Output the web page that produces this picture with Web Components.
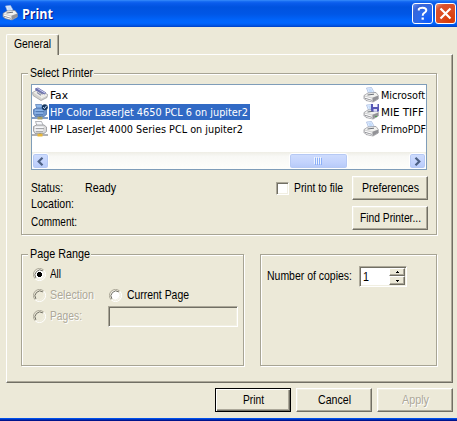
<!DOCTYPE html>
<html lang="en">
<head>
<meta charset="utf-8">
<title>Print</title>
<style>
html,body{margin:0;padding:0;overflow:hidden}
body{width:457px;height:421px;background:#ECE9D8;color:#000;font-family:"Liberation Sans",Arial,sans-serif}
</style>
</head>
<body>
<print-dialog></print-dialog>
<script>
const define = (name, html, setup) => customElements.define(name, class extends HTMLElement {
  connectedCallback() {
    if (this.shadowRoot) return;
    this.attachShadow({mode: 'open'}).innerHTML = typeof html === 'function' ? html(this) : html;
    if (setup) setup(this, this.shadowRoot);
  }
});

// Text fitted horizontally to the width given in "w".
define('ui-label', `<style>
:host{display:block;height:16px;line-height:16px;font-size:12.4px;white-space:nowrap;flex:none}
:host([face=list]){font-family:"DejaVu Sans Condensed","DejaVu Sans",sans-serif;font-size:11px;line-height:17px}
:host([disabled]){color:#ACA899;text-shadow:1px 1px 0 #fff}
span{display:inline-block;transform-origin:0 50%}
</style><span></span>`, (host, root) => {
  const span = root.querySelector('span'), w = +host.getAttribute('w');
  span.textContent = host.getAttribute('text');
  host.style.width = w + 'px';
  span.style.transform = `scaleX(${w / span.getBoundingClientRect().width})`;
});

const printer = `
<path d="M3.500 1 8.500 .5 11.500 6 6 7.500z" fill="#EAF3FF" stroke="#9DB4DE" stroke-width=".7"/>
<path d="M5 1.700 8 1.400 10 5.500 6.700 6z" fill="#C4DCFB"/>
<path d="M1 8.500 5 6 13 5.500 15.300 8.500V12L10 15 3 13.500 1 11.500z" fill="#D2D2D3" stroke="#8E8E93" stroke-width=".7"/>
<path d="M1.500 8.500 5 6.500 12.700 6 15 8.500 9.500 10.500z" fill="#F1F1EF"/>
<path d="M4.500 8 11 7.200" stroke="#6C717A"/>
<path d="M9.500 10.700 15 8.800V11.800L9.800 14.700z" fill="#929297"/>
<path d="M2 10.300 9 12.400M3 12.300 9 14" stroke="#fff" stroke-width="1.100"/>
<path d="M2 11.300 9 13.400" stroke="#77797F" stroke-width=".7"/>`;
const netPrinter = (a, b, c, l) => `
<path d="M3.500 .5H9.500L11.500 5H5z" fill="${a}" stroke="${c}" stroke-width=".6"/>
<path d="M1.500 5.500 4.500 4H12L14.500 6V10.500L12 12.500H3L1.500 10z" fill="${b}" stroke="${c}" stroke-width=".7"/>
<path d="M3 6.200H11.500M2.500 9H11" stroke="${a}" stroke-width="1.400"/>
<path d="M4 7.600H12M4 10.700H11" stroke="${c}" stroke-width=".7"/>
<path d="M0 14H16" stroke="${c}" stroke-width="1.300"/><path d="M8 12V14" stroke="${c}" stroke-width="1.500"/>
<rect x="5.500" y="12.700" width="5" height="2.800" fill="${l}"/>`;
const icons = {
  printer,
  tiff: printer + `<path d="M8 0H16V7.500H9L8 6.500z" fill="#5757B5"/><rect x="10" y="0" width="4.500" height="3" fill="#F5F5FF"/><rect x="10.500" y="5" width="3.500" height="2.500" fill="#DADAF4"/><path d="M12 12.500H14" stroke="#4FA04F"/>`,
  fax: `<path d="M.5 5.500 7 2 15.500 7.500 15 10.500 9 13.500 1 8.500z" fill="#D4D3CF" stroke="#95959A" stroke-width=".7"/>
<path d="M1.500 5.500 7 2.700 14.500 7.500 9 10.500z" fill="#EFEEE9"/>
<path d="M3 1.500 6 .5 14 5.500 13 7.500 9.500 6.500 3.500 3.500z" fill="#6E72AE"/>
<path d="M5.500 1.500 13 6" stroke="#CDD2F2"/>
<path d="M5 5.500 9 8.300M7 4.900 10.700 7.300" stroke="#858BA8" stroke-width="1.100"/><path d="M9 11 15 8" stroke="#fff" stroke-width=".8"/>`,
  shared: netPrinter('#F6F8FB', '#D8D8D8', '#85878C', '#E9B83A'),
  selected: netPrinter('#8DB6EA', '#7096CC', '#3F6AA8', '#A89F63') + `<circle cx="12.800" cy="3.200" r="3" fill="#15365F"/><path d="M11.200 3.100 12.500 4.600 14.700 1.700" fill="none" stroke="#C7DFFF" stroke-width="1"/>`
};
define('ui-icon', h => `<style>:host{display:block;width:17px;height:17px;flex:none}svg{display:block}</style>
<svg width="17" height="17" viewBox="0 0 17 17">${icons[h.getAttribute('kind')]}</svg>`);

define('title-button', h => `<style>
:host{display:block;box-sizing:border-box;width:21px;height:21px;border:1px solid #fff;border-radius:3px;
background:radial-gradient(circle at 80% 85%,#0A5BFF,#2E6BEA 45%,#3865D8 75%,#6E93EC)}
:host([kind=close]){background:radial-gradient(circle at 75% 85%,#D83A05,#DD4C22 50%,#D9502D 75%,#EC9A82)}
svg{display:block}</style><svg width="19" height="19" viewBox="0 0 19 19" fill="none" stroke="#fff">
${h.getAttribute('kind') === 'close' ? '<path d="M4.500 4.500 14.500 14.500M14.500 4.500 4.500 14.500" stroke-width="2.200"/>'
 : '<path d="M5.800 6.500V5Q6.500 3.700 9.500 3.700 13.300 3.700 13.300 6.300 13.300 8 11.300 8.900 9.700 9.700 9.700 11.700" stroke-width="2"/><path d="M9.700 13.500V15.700" stroke-width="2.300"/>'}</svg>`);

define('title-bar', `<style>
:host{display:flex;box-sizing:border-box;height:27px;padding:3px 1px 0 2px;
background:linear-gradient(#3E92FC 0,#1C72F4 1px,#0A5CEC 3px,#0053DF 7px,#0056E6 14px,#0064FB 20px,#0066FF 23px,#005AEC 25px,#0040C4 27px)}
ui-icon{margin-top:2px}
ui-label{font-family:"Open Sans","Noto Sans",sans-serif;font-weight:700;font-size:13.500px;color:#fff;text-shadow:1px 1px 0 #0A1883;margin:3px auto 0 3px}
title-button+title-button{margin-left:2px}
</style><ui-icon kind="printer"></ui-icon><ui-label text="Print" w="31"></ui-label><title-button kind="help"></title-button><title-button kind="close"></title-button>`);

define('group-box', h => `<style>
:host{display:block;box-sizing:border-box;border:1px solid #A7A494;box-shadow:1px 1px 0 #fff,inset 1px 1px 0 #fff}
ui-label{background:#ECE9D8;padding:0 1px 0 2px;margin:-9px 0 0 6px}
</style>${h.hasAttribute('legend') ? `<ui-label text="${h.getAttribute('legend')}" w="${h.getAttribute('lw')}"></ui-label>` : ''}<slot></slot>`);

define('push-button', h => `<style>
:host{display:flex;box-sizing:border-box;width:76px;height:24px;align-items:center;justify-content:center;
border:1px solid;border-color:#fff #716F64 #716F64 #fff;box-shadow:inset -1px -1px 0 #ACA899,inset 1px 1px 0 #F1EFE2}
:host([default]){border:1px solid #000;box-shadow:inset 1px 1px 0 #fff,inset -1px -1px 0 #716F64,inset -2px -2px 0 #ACA899}
</style><ui-label text="${h.getAttribute('text')}" w="${h.getAttribute('w')}" ${h.hasAttribute('disabled') ? 'disabled' : ''}></ui-label>`);

define('radio-option', h => `<style>
:host{display:flex;align-items:center;height:16px}svg{display:block;margin-right:${h.getAttribute('gap') || 4}px}
</style><svg width="13" height="13" viewBox="0 0 13 13"><circle cx="6.500" cy="6.500" r="5" fill="${h.hasAttribute('disabled') ? '#ECE9D8' : '#fff'}"/>
<g fill="none"><path d="M2.200 10.800A6 6 0 0 1 10.800 2.200" stroke="#ACA899"/><path d="M2.200 10.800A6 6 0 0 0 10.800 2.200" stroke="#fff"/>
<path d="M3 10A5 5 0 0 1 10 3" stroke="#716F64"/><path d="M3 10A5 5 0 0 0 10 3" stroke="#F1EFE2"/></g>
${h.hasAttribute('checked') ? '<path d="M5 4H8V5H9V8H8V9H5V8H4V5H5z" fill="#000"/>' : ''}</svg>
<ui-label text="${h.getAttribute('text')}" w="${h.getAttribute('w')}" ${h.hasAttribute('disabled') ? 'disabled' : ''}></ui-label>`);

define('sunken-box', `<style>
:host{display:flex;box-sizing:border-box;border:1px solid;border-color:#ACA899 #fff #fff #ACA899;
box-shadow:inset 1px 1px 0 #716F64,inset -1px -1px 0 #F1EFE2}</style><slot></slot>`);

define('copies-spinner', `<style>
:host{display:block}
sunken-box{width:48px;height:21px;background:#fff;padding:1px}
ui-label{margin:1px auto 0 2px}
.s{display:grid;grid-template-rows:8px 9px;width:16px}
.s div{display:flex;align-items:center;justify-content:center;box-sizing:border-box;background:#ECE9D8;border:1px solid;border-color:#fff #716F64 #716F64 #fff;box-shadow:inset -1px -1px 0 #ACA899}
svg{display:block}
</style><sunken-box><ui-label text="1" w="6"></ui-label><div class="s"><div><svg width="3" height="2"><path d="M1 0H2V1H3V2H0V1H1z"/></svg></div><div><svg width="3" height="2"><path d="M0 0H3V1H2V2H1V1H0z"/></svg></div></div></sunken-box>`);

define('list-item', h => `<style>
:host{display:flex;height:17px}
div{height:16px;padding:0 2px 0 1px}
:host([selected]) div{background:#316AC5;color:#fff}
</style><ui-icon kind="${h.getAttribute('icon')}"></ui-icon><div><ui-label face="list" text="${h.getAttribute('text')}" w="${h.getAttribute('w')}"></ui-label></div>`);

define('scroll-bar', `<style>
:host{display:flex;height:17px;background:linear-gradient(#EEEDE5,#F8F8F5 25%,#FEFEFB)}
.b,.t{box-sizing:border-box;height:16px;margin-top:1px;border:1px solid #fff;border-radius:3px;background:linear-gradient(#CFDDFD,#C3D3FD 60%,#B5C9F8);box-shadow:inset 0 0 0 1px #B6C9F4;display:flex;align-items:center;justify-content:center}
.b{width:17px}.t{width:59px;margin-left:240px;margin-right:auto}svg{display:block}
</style>
<div class="b"><svg width="9" height="9" fill="none" stroke="#4D6185" stroke-width="2.200"><path d="M6.500 .8 2.700 4.500 6.500 8.200"/></svg></div>
<div class="t"><svg width="9" height="8"><path d="M.5 0V7M2.500 0V7M4.500 0V7M6.500 0V7" stroke="#EEF4FE"/><path d="M1.500 1V8M3.500 1V8M5.500 1V8M7.500 1V8" stroke="#8CB0F8"/></svg></div>
<div class="b"><svg width="9" height="9" fill="none" stroke="#4D6185" stroke-width="2.200"><path d="M2.500 .8 6.300 4.500 2.500 8.200"/></svg></div>`);

define('printer-list', `<style>
:host{display:flex;flex-direction:column;justify-content:space-between;box-sizing:border-box;width:396px;height:86px;border:1px solid #7F9DB9;background:#fff;overflow:hidden}
.c{display:grid;grid-template-columns:331px 63px;padding-top:2px}
</style><div class="c"><div>
<list-item icon="fax" text="Fax" w="18"></list-item>
<list-item icon="selected" selected text="HP Color LaserJet 4650 PCL 6 on jupiter2" w="198"></list-item>
<list-item icon="shared" text="HP LaserJet 4000 Series PCL on jupiter2" w="193"></list-item></div><div>
<list-item icon="printer" text="Microsoft" w="44"></list-item>
<list-item icon="tiff" text="MIE TIFF" w="43"></list-item>
<list-item icon="printer" text="PrimoPDF" w="45"></list-item></div></div>
<scroll-bar></scroll-bar>`);

define('tab-panel', `<style>
:host{display:block;margin:7px 0 0 6px}
.tab{box-sizing:border-box;width:53px;height:21px;margin-bottom:-1px;position:relative;background:#ECE9D8;border:1px solid #fff;border-right-color:#716F64;border-bottom:0;border-radius:2px 2px 0 0;box-shadow:inset -1px 0 0 #ACA899;padding:1px 0 0 7px}
.panel{box-sizing:border-box;width:447px;height:329px;border:1px solid;border-color:#fff #716F64 #716F64 #fff;box-shadow:inset -1px -1px 0 #ACA899;padding:18px 0 0 14px}
</style><div class="tab"><ui-label text="General" w="37"></ui-label></div><div class="panel"><slot></slot></div>`);

define('print-dialog', `<style>
:host{display:flex;flex-direction:column;width:457px;height:421px;background:#ECE9D8}
.g1{width:416px;height:162px}
printer-list{margin:3px 0 0 9px}
.info{display:flex;justify-content:space-between;padding:6px 8px 0 9px}
.status{display:grid;grid-template-columns:54px auto;grid-template-rows:16px 18px 16px;padding-top:4px}
.right{display:grid;grid-template-columns:13px 63px 76px;row-gap:6px;align-items:center}
.right sunken-box{width:13px;height:13px;background:#fff}
.right ui-label{margin-left:5px}
.right push-button{grid-column:3}
.row{display:flex;gap:16px;margin-top:19px}
.g2{width:223px;height:112px}.g3{width:177px;height:112px}
.opts{display:grid;grid-template-columns:76px 129px;grid-template-rows:22px 20px 22px;align-items:center;padding:1px 0 0 11px}
.opts sunken-box{width:130px;height:21px;margin-left:-1px}
.copies{display:flex;align-items:center;gap:7px;padding:11px 0 0 6px}
.copies ui-label{margin-top:-2px}
.actions{display:flex;gap:5px;margin:5px 0 0 215px}
.edge{height:3px;margin-top:auto;background:linear-gradient(#0050EA 0 1px,#0030B8 1px 2px,#00138C 2px)}
</style>
<title-bar></title-bar>
<tab-panel>
 <group-box class="g1" legend="Select Printer" lw="63">
  <printer-list></printer-list>
  <div class="info"><div class="status"><ui-label text="Status:" w="32"></ui-label><ui-label text="Ready" w="31"></ui-label><ui-label text="Location:" w="43" style="grid-column:1/3"></ui-label><ui-label text="Comment:" w="46" style="grid-column:1/3"></ui-label></div>
  <div class="right"><sunken-box></sunken-box><ui-label text="Print to file" w="49"></ui-label><push-button text="Preferences" w="57"></push-button><push-button text="Find Printer..." w="61"></push-button></div></div>
 </group-box>
 <div class="row">
  <group-box class="g2" legend="Page Range" lw="60"><div class="opts">
   <radio-option checked text="All" w="11"></radio-option><span></span>
   <radio-option disabled text="Selection" w="44"></radio-option><radio-option gap="5" text="Current Page" w="62"></radio-option>
   <radio-option disabled text="Pages:" w="32"></radio-option><sunken-box></sunken-box></div></group-box>
  <group-box class="g3"><div class="copies"><ui-label text="Number of copies:" w="85"></ui-label><copies-spinner></copies-spinner></div></group-box>
 </div>
</tab-panel>
<div class="actions"><push-button default text="Print" w="21"></push-button><push-button text="Cancel" w="33"></push-button><push-button disabled text="Apply" w="27"></push-button></div>
<div class="edge"></div>`);
</script>
</body>
</html>
